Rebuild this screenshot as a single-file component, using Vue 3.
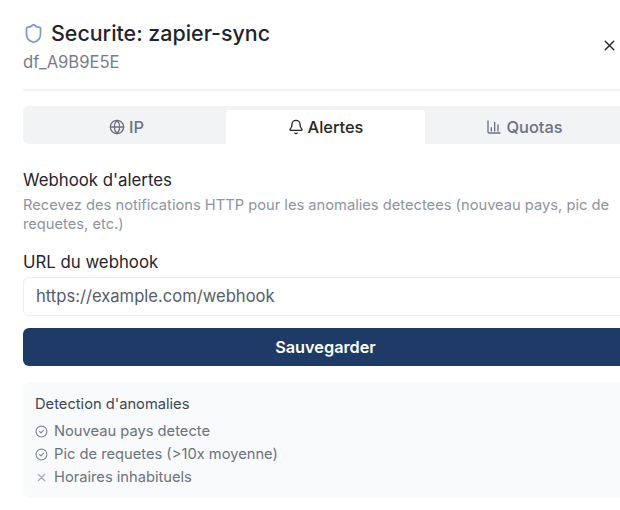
<template>
  <div class="page">
    <div class="dialog">
      <header class="head">
        <div>
          <div class="title">
            <svg class="shield" width="21" height="21" viewBox="0 0 24 24" fill="none" stroke="#7a9ccb" stroke-width="2" stroke-linecap="round" stroke-linejoin="round">
              <path d="M20 13c0 5-3.5 7.5-7.66 8.95a1 1 0 0 1-.67-.01C7.5 20.5 4 18 4 13V6a1 1 0 0 1 1-1c2 0 4.5-1.2 6.24-2.72a1.17 1.17 0 0 1 1.52 0C14.51 3.81 17 5 19 5a1 1 0 0 1 1 1z" />
            </svg>
            <span>Securite: zapier-sync</span>
          </div>
          <div class="sub">df_A9B9E5E</div>
        </div>
        <svg class="close" width="17" height="17" viewBox="0 0 24 24" fill="none" stroke="#27272a" stroke-width="2" stroke-linecap="round">
          <path d="M18 6 6 18M6 6l12 12" />
        </svg>
      </header>

      <div class="tabs">
        <div class="tab">
          <svg viewBox="0 0 24 24" fill="none" stroke="currentColor" stroke-width="2" stroke-linecap="round" stroke-linejoin="round">
            <circle cx="12" cy="12" r="10" />
            <path d="M12 2a14.5 14.5 0 0 0 0 20 14.5 14.5 0 0 0 0-20M2 12h20" />
          </svg>
          IP
        </div>
        <div class="tab active">
          <svg viewBox="0 0 24 24" fill="none" stroke="currentColor" stroke-width="2" stroke-linecap="round" stroke-linejoin="round">
            <path d="M10.27 21a2 2 0 0 0 3.46 0" />
            <path d="M3.26 15.33A1 1 0 0 0 4 17h16a1 1 0 0 0 .74-1.67C19.41 13.96 18 12.5 18 8A6 6 0 0 0 6 8c0 4.5-1.41 5.96-2.74 7.33" />
          </svg>
          Alertes
        </div>
        <div class="tab">
          <svg viewBox="0 0 24 24" fill="none" stroke="currentColor" stroke-width="2" stroke-linecap="round" stroke-linejoin="round">
            <path d="M3 3v16a2 2 0 0 0 2 2h16M8 18v-5M13 18V5M18 18V9" />
          </svg>
          Quotas
        </div>
      </div>

      <section class="intro">
        <h3>Webhook d'alertes</h3>
        <p>Recevez des notifications HTTP pour les anomalies detectees (nouveau pays, pic de requetes, etc.)</p>
      </section>

      <label class="label">URL du webhook</label>
      <div class="input">https://example.com/webhook</div>
      <button class="save">Sauvegarder</button>

      <section class="box">
        <div class="box-title">Detection d'anomalies</div>
        <div v-for="item in items" :key="item.text" class="row">
          <svg v-if="item.on" width="13" height="13" viewBox="0 0 24 24" fill="none" stroke="#7b8794" stroke-width="2" stroke-linecap="round" stroke-linejoin="round">
            <circle cx="12" cy="12" r="10" />
            <path d="m8.5 12 2.5 2.5 4.5-4.5" />
          </svg>
          <svg v-else width="13" height="13" viewBox="0 0 24 24" fill="none" stroke="#a3aab5" stroke-width="2" stroke-linecap="round">
            <path d="M18 6 6 18M6 6l12 12" />
          </svg>
          <span>{{ item.text }}</span>
        </div>
      </section>
    </div>
  </div>
</template>

<script setup>
const items = [
  { text: 'Nouveau pays detecte', on: true },
  { text: 'Pic de requetes (>10x moyenne)', on: true },
  { text: 'Horaires inhabituels', on: false },
]
</script>

<style>
html,
body {
  margin: 0;
  background: #fff;
}
</style>

<style scoped>
.page {
  width: 620px;
  height: 510px;
  overflow: hidden;
  background: #fff;
  font-family: Inter, "Noto Sans", sans-serif;
}

.dialog {
  width: 605px;
  margin-left: 23px;
  padding-top: 20px;
}

.head {
  display: flex;
  align-items: flex-start;
  justify-content: space-between;
  height: 71px;
  padding-right: 10px;
  box-sizing: border-box;
  border-bottom: 2px solid #f1f2f4;
}

.title {
  display: flex;
  align-items: center;
  gap: 7px;
  font-size: 21.4px;
  line-height: 26px;
  font-weight: 450;
  color: #1f2430;
}

.sub {
  margin-top: 6px;
  font-size: 16.6px;
  line-height: 20px;
  color: #757d8a;
}

.close {
  margin-top: 17px;
}

.tabs {
  display: grid;
  grid-template-columns: repeat(3, 1fr);
  height: 38px;
  margin-top: 15px;
  padding: 4px 4px 0;
  box-sizing: border-box;
  background: #f1f3f5;
  border-radius: 6px;
}

.tab {
  display: flex;
  align-items: center;
  justify-content: center;
  gap: 4px;
  font-size: 16.4px;
  font-weight: 450;
  color: #6b7280;
  border-radius: 4px 4px 0 0;
}

.tab svg {
  width: 16px;
  height: 16px;
}

.tab.active {
  background: #fff;
  color: #27272a;
}

.intro {
  margin-top: 24px;
}

h3 {
  margin: 0;
  font-size: 16.8px;
  line-height: 24px;
  font-weight: 430;
  color: #1f2430;
}

p {
  margin: 3.5px 0 0;
  font-size: 14.7px;
  line-height: 19px;
  color: #8b95a1;
}

.label {
  display: block;
  margin-top: 16.5px;
  font-size: 16.8px;
  line-height: 24px;
  font-weight: 430;
  color: #1f2430;
}

.input {
  height: 38.5px;
  margin-top: 3px;
  padding: 0 12px;
  box-sizing: border-box;
  display: flex;
  align-items: center;
  font-size: 16.6px;
  color: #555d6b;
  border: 1px solid #eceef1;
  border-radius: 6px;
}

.save {
  display: block;
  width: 100%;
  height: 38px;
  margin-top: 12.5px;
  border: 0;
  border-radius: 6px;
  background: #1e3a66;
  color: #fff;
  font-family: inherit;
  font-size: 16.3px;
  font-weight: 600;
}

.box {
  margin-top: 16px;
  height: 116px;
  box-sizing: border-box;
  padding: 12px;
  background: #f8fafb;
  border-radius: 8px;
}

.box-title {
  font-size: 14.7px;
  line-height: 20px;
  font-weight: 430;
  color: #3f4652;
}

.row {
  display: flex;
  align-items: center;
  gap: 6px;
  height: 23px;
  font-size: 14.7px;
  color: #6b7280;
}

.box-title + .row {
  margin-top: 5.5px;
}
</style>
